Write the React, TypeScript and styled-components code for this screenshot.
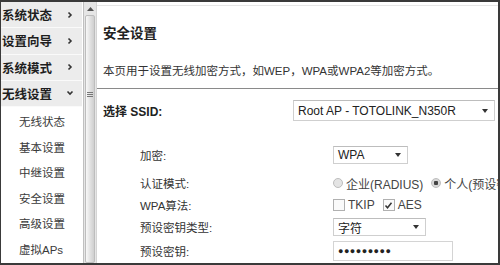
import React from "react";
import styled, { createGlobalStyle } from "styled-components";

const Global = createGlobalStyle`
  html, body { margin: 0; padding: 0; background: #fff; }
  body { font-family: "Liberation Sans", "Noto Sans CJK SC", sans-serif; }
  * { box-sizing: border-box; }
`;

const Frame = styled.div`
  width: 500px;
  height: 265px;
  border-style: solid;
  border-color: #3a3a3a;
  border-width: 2px 2px 2px 1px;
  display: flex;
  overflow: hidden;
  background: #fff;
  font-family: "Liberation Sans", "Noto Sans CJK SC", sans-serif;
  color: #333;
`;

const Side = styled.div`
  width: 96px;
  flex: none;
  display: flex;
  gap: 1px;
`;

const Menu = styled.div`
  width: 81px;
  display: flex;
  flex-direction: column;
`;

const TopItem = styled.div`
  height: 27px;
  border-bottom: 1px solid #fafafa;
  background: #ececec;
  display: flex;
  align-items: center;
  justify-content: space-between;
  padding: 0 8px 0 1px;
  font-size: 12.5px;
  font-weight: bold;
  color: #1e1e1e;
`;

const SubList = styled.div`
  padding-top: 3px;
  display: flex;
  flex-direction: column;
`;

const SubItem = styled.div`
  height: 25.5px;
  line-height: 25.5px;
  padding-left: 18px;
  font-size: 11.5px;
  color: #3a3a3a;
`;

const Scroll = styled.div`
  width: 14px;
  flex: none;
  background: #e6e6e6;
  border-left: 1px solid #c0c0c0;
  border-right: 1px solid #d4d4d4;
  display: flex;
  flex-direction: column;
  align-items: center;
  padding-top: 5px;
`;

const Thumb = styled.div`
  margin-top: 4px;
  width: 10px;
  flex: 1;
  border: 1px solid #bdbdbd;
  border-radius: 2px;
  background: linear-gradient(to right, #f8f8f8, #dedede 60%, #cfcfcf);
  display: flex;
  align-items: center;
  justify-content: center;
  padding-bottom: 90px;
`;

const Main = styled.div`
  flex: 1;
  min-width: 0;
  display: flex;
  flex-direction: column;
  white-space: nowrap;
`;

const TopRule = styled.div`
  margin-top: 3px;
  height: 1px;
  background: #e6e6e6;
`;

const Title = styled.div`
  margin-top: 19px;
  padding-left: 6px;
  line-height: 18px;
  font-size: 13.5px;
  font-weight: bold;
  color: #222;
`;

const Desc = styled.div`
  margin-top: 20px;
  padding-left: 6px;
  line-height: 16px;
  font-size: 11.5px;
  color: #333;
`;

const Divider = styled.div`
  margin-top: 9px;
  height: 1px;
  background: #8a8a8a;
`;

const SsidRow = styled.div`
  margin-top: 11px;
  padding-left: 6px;
  display: flex;
  align-items: center;
`;

const SsidLabel = styled.div`
  width: 190px;
  font-size: 12px;
  font-weight: bold;
  color: #222;
`;

const Row = styled.div<{ $gap: number; $h: number }>`
  margin-top: ${(p) => p.$gap}px;
  height: ${(p) => p.$h}px;
  padding-left: 43px;
  display: flex;
  align-items: center;
  font-size: 11.5px;
`;

const Label = styled.div`
  width: 193px;
  flex: none;
  color: #333;
`;

const Select = styled.div<{ $w: number; $h: number }>`
  width: ${(p) => p.$w}px;
  height: ${(p) => p.$h}px;
  flex: none;
  border: 1px solid #cfcfcf;
  border-top-color: #bdbdbd;
  background: #fff;
  display: flex;
  align-items: center;
  justify-content: space-between;
  padding: 0 6px 0 4px;
  font-size: 12px;
  color: #222;
`;

const Caret = styled.span`
  width: 0;
  height: 0;
  border-left: 3.5px solid transparent;
  border-right: 3.5px solid transparent;
  border-top: 4px solid #333;
`;

const Input = styled.div`
  width: 120px;
  height: 20px;
  flex: none;
  border: 1px solid #d4d4d4;
  display: flex;
  align-items: center;
  padding-left: 4px;
  font-size: 9px;
  letter-spacing: 0.5px;
  color: #222;
`;

const Choice = styled.label`
  display: flex;
  align-items: center;
  gap: 3px;
  margin-right: 8px;
  font-size: 12px;
  color: #444;
`;

const Radio = styled.span<{ $on?: boolean }>`
  width: 10px;
  height: 10px;
  border-radius: 50%;
  border: 1px solid #bdbdbd;
  background: ${(p) =>
    p.$on
      ? "radial-gradient(circle, #444 0 2px, #d8d8d8 2.5px)"
      : "#e4e4e4"};
`;

const Check = styled.span`
  width: 12px;
  height: 12px;
  border: 1px solid #b0b0b0;
  background: #fafafa;
  display: flex;
  align-items: center;
  justify-content: center;
`;

const Chevron = ({ down }: { down?: boolean }) => (
  <svg width="8" height="8" viewBox="0 0 8 8">
    {down ? (
      <path d="M1.5 2.5 L4 5 L6.5 2.5" fill="none" stroke="#333" strokeWidth="1.6" />
    ) : (
      <path d="M2.5 1.5 L5 4 L2.5 6.5" fill="none" stroke="#333" strokeWidth="1.6" />
    )}
  </svg>
);

export default function App() {
  return (
    <>
      <Global />
      <Frame>
        <Side>
          <Menu>
            <TopItem>系统状态<Chevron /></TopItem>
            <TopItem>设置向导<Chevron /></TopItem>
            <TopItem>系统模式<Chevron /></TopItem>
            <TopItem>无线设置<Chevron down /></TopItem>
            <SubList>
              <SubItem>无线状态</SubItem>
              <SubItem>基本设置</SubItem>
              <SubItem>中继设置</SubItem>
              <SubItem>安全设置</SubItem>
              <SubItem>高级设置</SubItem>
              <SubItem>虚拟APs</SubItem>
            </SubList>
          </Menu>
          <Scroll>
            <svg width="7" height="4" viewBox="0 0 7 4">
              <path d="M0 4 L3.5 0 L7 4 Z" fill="#555" />
            </svg>
            <Thumb>
              <svg width="6" height="5" viewBox="0 0 6 5">
                <path d="M0 0.5 H6 M0 2.5 H6 M0 4.5 H6" stroke="#777" strokeWidth="1" />
              </svg>
            </Thumb>
          </Scroll>
        </Side>
        <Main>
          <TopRule />
          <Title>安全设置</Title>
          <Desc>本页用于设置无线加密方式，如WEP，WPA或WPA2等加密方式。</Desc>
          <Divider />
          <SsidRow>
            <SsidLabel>选择 SSID:</SsidLabel>
            <Select $w={202} $h={21}>
              Root AP - TOTOLINK_N350R<Caret />
            </Select>
          </SsidRow>
          <Row $gap={25} $h={18}>
            <Label>加密:</Label>
            <Select $w={75} $h={18}>WPA<Caret /></Select>
          </Row>
          <Row $gap={10} $h={18}>
            <Label>认证模式:</Label>
            <Choice><Radio />企业(RADIUS)</Choice>
            <Choice><Radio $on />个人(预设密钥)</Choice>
          </Row>
          <Row $gap={4} $h={18}>
            <Label>WPA算法:</Label>
            <Choice><Check />TKIP</Choice>
            <Choice>
              <Check>
                <svg width="9" height="9" viewBox="0 0 9 9">
                  <path d="M1.5 4.5 L3.5 6.8 L7.5 1.8" fill="none" stroke="#333" strokeWidth="1.5" />
                </svg>
              </Check>
              AES
            </Choice>
          </Row>
          <Row $gap={4} $h={18}>
            <Label>预设密钥类型:</Label>
            <Select $w={93} $h={18}>字符<Caret /></Select>
          </Row>
          <Row $gap={5} $h={20}>
            <Label>预设密钥:</Label>
            <Input>●●●●●●●●●</Input>
          </Row>
        </Main>
      </Frame>
    </>
  );
}
